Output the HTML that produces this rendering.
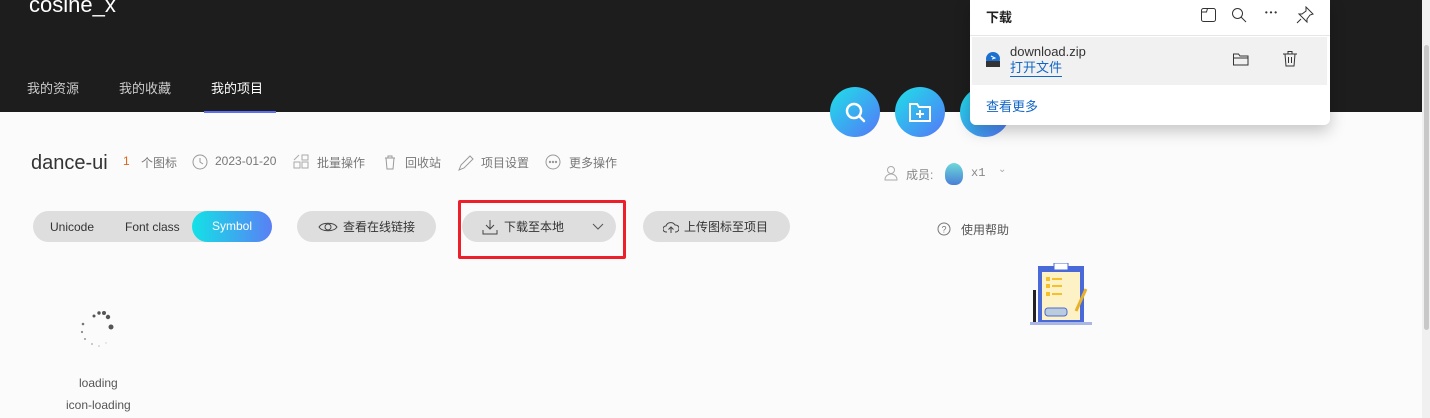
<!DOCTYPE html>
<html><head><meta charset="utf-8"><style>
*{margin:0;padding:0;box-sizing:border-box}
body{width:1430px;height:418px;overflow:hidden;background:#fbfbfb;font-family:"Liberation Sans","Noto Sans CJK SC",sans-serif;position:relative;color:#333}
.hdr{position:absolute;left:0;top:0;width:1422px;height:112px;background:#1d1d1d}
.abs{position:absolute}
.nav{font-size:13px;color:#ccc;top:78px}
.meta{font-size:12px;color:#777;top:154px}
.btn{position:absolute;top:211px;height:31px;border-radius:16px;background:#dedede;font-size:12px;color:#333;display:flex;align-items:center}
.circ{position:absolute;top:87px;width:50px;height:50px;border-radius:50%;background:linear-gradient(135deg,#1ee0e8,#4a8cf5 80%,#5b6ef0)}
</style></head><body>
<div class="hdr"></div>
<div class="abs" style="left:29px;top:-8px;font-size:22px;color:#fff">cosine_x</div>
<div class="abs nav" style="left:27px">我的资源</div>
<div class="abs nav" style="left:119px">我的收藏</div>
<div class="abs nav" style="left:211px;color:#fff">我的项目</div>
<div class="abs" style="left:204px;top:111px;width:72px;height:2px;background:#5b6ef5"></div>
<div class="abs" style="left:1422px;top:0;width:8px;height:418px;background:#f0f0f0"></div>
<div class="abs" style="left:1424px;top:45px;width:5px;height:285px;background:#c8c8c8;border-radius:3px"></div>

<div class="circ" style="left:830px"><svg width="50" height="50"><circle cx="24" cy="24" r="7" fill="none" stroke="#fff" stroke-width="2.5"/><path d="M29 29l5 5" stroke="#fff" stroke-width="2.5" stroke-linecap="round"/></svg></div>
<div class="circ" style="left:895px"><svg width="50" height="50"><path d="M15 17h7l2 3h11v14H15z" fill="none" stroke="#fff" stroke-width="2"/><path d="M25 23v8M21 27h8" stroke="#fff" stroke-width="2"/></svg></div>
<div class="circ" style="left:960px"></div>

<div class="abs" style="left:31px;top:152px;font-size:20px;color:#333">dance-ui</div>
<div class="abs meta" style="left:123px;color:#e0661a">1</div>
<div class="abs meta" style="left:141px">个图标</div>
<svg class="abs" style="left:192px;top:154px" width="16" height="16"><circle cx="8" cy="8" r="7" fill="none" stroke="#999"/><path d="M8 4v4l3 2" fill="none" stroke="#999"/></svg>
<div class="abs meta" style="left:215px">2023-01-20</div>
<svg class="abs" style="left:293px;top:154px" width="16" height="16" fill="none" stroke="#aaa"><rect x="1" y="8" width="6" height="6"/><rect x="9" y="8" width="6" height="6"/><rect x="9" y="1" width="6" height="5"/><path d="M1 6L6 1"/></svg>
<div class="abs meta" style="left:317px">批量操作</div>
<svg class="abs" style="left:383px;top:154px" width="14" height="16" fill="none" stroke="#999"><path d="M2 4h10M3 4l1 11h6l1-11M5 4V2h4v2"/></svg>
<div class="abs meta" style="left:405px">回收站</div>
<svg class="abs" style="left:457px;top:154px" width="18" height="18" fill="none" stroke="#999"><path d="M2 16l2-5 9-9 3 3-9 9z"/></svg>
<div class="abs meta" style="left:481px">项目设置</div>
<svg class="abs" style="left:545px;top:154px" width="16" height="16" fill="none" stroke="#999"><circle cx="8" cy="8" r="7"/><circle cx="5" cy="8" r=".7" fill="#999"/><circle cx="8" cy="8" r=".7" fill="#999"/><circle cx="11" cy="8" r=".7" fill="#999"/></svg>
<div class="abs meta" style="left:569px">更多操作</div>

<svg class="abs" style="left:883px;top:165px" width="16" height="16" fill="none" stroke="#aaa"><circle cx="8" cy="5" r="3.5"/><path d="M2 15c0-4 3-6 6-6s6 2 6 6z"/></svg>
<div class="abs" style="left:906px;top:166px;font-size:12px;color:#888">成员:</div>
<div class="abs" style="left:945px;top:163px;width:18px;height:22px;border-radius:50% 50% 40% 40%;background:linear-gradient(#6cd8d8,#4a7fd8)"></div>
<div class="abs" style="left:971px;top:166px;font-size:12px;color:#888;font-family:'Liberation Mono',monospace">x1</div>
<div class="abs" style="left:998px;top:164px;font-size:10px;color:#aaa">⌄</div>

<div class="abs" style="left:33px;top:211px;width:239px;height:31px;border-radius:16px;background:#dedede"></div>
<div class="abs" style="left:50px;top:220px;font-size:12px;color:#333">Unicode</div>
<div class="abs" style="left:125px;top:220px;font-size:12px;color:#333">Font class</div>
<div class="abs" style="left:192px;top:211px;width:80px;height:31px;border-radius:16px;background:linear-gradient(90deg,#13e2e6,#5a7ff5);color:#fff;font-size:12px;text-align:center;line-height:31px">Symbol</div>

<div class="btn" style="left:297px;width:139px;padding-left:21px"><svg width="20" height="14" fill="none" stroke="#444"><path d="M1 7C4 2 16 2 19 7C16 12 4 12 1 7z"/><circle cx="10" cy="7" r="3"/></svg><span style="margin-left:5px">查看在线链接</span></div>
<div class="btn" style="left:462px;width:154px;padding-left:20px"><svg width="16" height="16" fill="none" stroke="#444"><path d="M8 1v9M4 6l4 4 4-4M1 11v4h14v-4"/></svg><span style="margin-left:6px">下载至本地</span><svg style="margin-left:28px" width="12" height="8" fill="none" stroke="#555"><path d="M1 1l5 5 5-5"/></svg></div>
<div class="abs" style="left:458px;top:200px;width:168px;height:59px;border:3px solid #ec1f2b;border-radius:2px"></div>
<div class="btn" style="left:643px;width:147px;padding-left:20px"><svg width="16" height="14" fill="none" stroke="#444"><path d="M4 12H3a3 3 0 010-6 5 5 0 019-1 3.5 3.5 0 011 7h-1M8 13V7M5.5 9.5L8 7l2.5 2.5"/></svg><span style="margin-left:5px">上传图标至项目</span></div>

<svg class="abs" style="left:937px;top:222px" width="14" height="14" fill="none" stroke="#777"><circle cx="7" cy="7" r="6"/><text x="7" y="10.5" font-size="9" text-anchor="middle" fill="#777" stroke="none">?</text></svg>
<div class="abs" style="left:961px;top:221px;font-size:12px;color:#555">使用帮助</div>

<svg class="abs" style="left:1030px;top:263px" width="62" height="62"><rect x="8" y="3" width="46" height="57" fill="#4a69d8"/><rect x="12" y="9" width="38" height="48" fill="#fdf2c6"/><rect x="24" y="0" width="14" height="7" fill="#fff" stroke="#4a69d8"/><rect x="16" y="14" width="4" height="4" fill="#f6c02a"/><rect x="22" y="15" width="10" height="2" fill="#f6c02a"/><rect x="16" y="21" width="4" height="4" fill="#f6c02a"/><rect x="22" y="22" width="10" height="2" fill="#f6c02a"/><rect x="16" y="29" width="4" height="4" fill="#f6c02a"/><rect x="22" y="30" width="10" height="2" fill="#f6c02a"/><rect x="15" y="45" width="22" height="8" rx="3" fill="#bcd" stroke="#4a69d8"/><path d="M56 26l-10 22" stroke="#e8b12a" stroke-width="3"/><rect x="3" y="27" width="3" height="33" fill="#222"/><rect x="0" y="59" width="62" height="3" fill="#aab6e6"/></svg>

<svg class="abs" style="left:80px;top:310px" width="36" height="38"><g fill="#555"><circle cx="24" cy="3" r="2"/><circle cx="28" cy="7" r="2.2"/><circle cx="31" cy="17" r="2.5"/><circle cx="19" cy="3" r="1.7"/><circle cx="14" cy="6" r="1.5"/><circle cx="3" cy="14" r="1.3" fill="#777"/><circle cx="2" cy="22" r="1.1" fill="#888"/><circle cx="5" cy="29" r="1" fill="#999"/><circle cx="12" cy="34" r=".9" fill="#aaa"/><circle cx="19" cy="36" r=".8" fill="#bbb"/><circle cx="26" cy="33" r=".7" fill="#ccc"/></g></svg>
<div class="abs" style="left:79px;top:376px;font-size:12px;color:#555">loading</div>
<div class="abs" style="left:66px;top:398px;font-size:12px;color:#555">icon-loading</div>

<div class="abs" style="left:970px;top:0;width:360px;height:125px;background:#fff;border-radius:0 0 6px 6px;box-shadow:0 6px 16px rgba(0,0,0,.22)">
 <div class="abs" style="left:16px;top:7px;font-size:13px;color:#222;font-weight:bold">下载</div>
 <svg class="abs" style="left:230px;top:7px" width="18" height="16" fill="none" stroke="#333"><rect x="1.5" y="1.5" width="14" height="13" rx="2"/><path d="M1.5 5h5l1-3.5"/></svg>
 <svg class="abs" style="left:261px;top:7px" width="16" height="16" fill="none" stroke="#333"><circle cx="6.5" cy="6.5" r="5"/><path d="M10 10l5 5"/></svg>
 <div class="abs" style="left:294px;top:3px;font-size:14px;color:#333;font-weight:bold">⋯</div>
 <svg class="abs" style="left:326px;top:6px" width="18" height="18" fill="none" stroke="#333"><path d="M10 1l7 7-3 1-3 4 0 3-8-8 3 0 4-3zM5 13l-4 4"/></svg>
 <div class="abs" style="left:0;top:35px;width:360px;height:1px;background:#e6e6e6"></div>
 <div class="abs" style="left:2px;top:37px;width:355px;height:48px;background:#f1f1f1"></div>
 <svg class="abs" style="left:15px;top:52px" width="16" height="16"><circle cx="8" cy="7" r="7" fill="#1a6fd0"/><rect x="1" y="9" width="14" height="6" fill="#333"/><path d="M6 4l4 2-3 1" stroke="#fff" fill="none"/></svg>
 <div class="abs" style="left:40px;top:44px;font-size:13px;color:#333">download.zip</div>
 <div class="abs" style="left:40px;top:60px;font-size:13px;color:#1266c6;border-bottom:1px solid #1266c6;line-height:16px">打开文件</div>
 <svg class="abs" style="left:262px;top:51px" width="18" height="16" fill="none" stroke="#333"><path d="M1.5 3h5l1.5 2h8v9h-14.5z M1.5 7h15"/></svg>
 <svg class="abs" style="left:312px;top:50px" width="16" height="18" fill="none" stroke="#333"><path d="M1 4h14M3 4l1 12h8l1-12M6 4V1.5h4V4M6.5 7v6M9.5 7v6"/></svg>
 <div class="abs" style="left:16px;top:96px;font-size:13px;color:#1266c6">查看更多</div>
</div>
</body></html>
